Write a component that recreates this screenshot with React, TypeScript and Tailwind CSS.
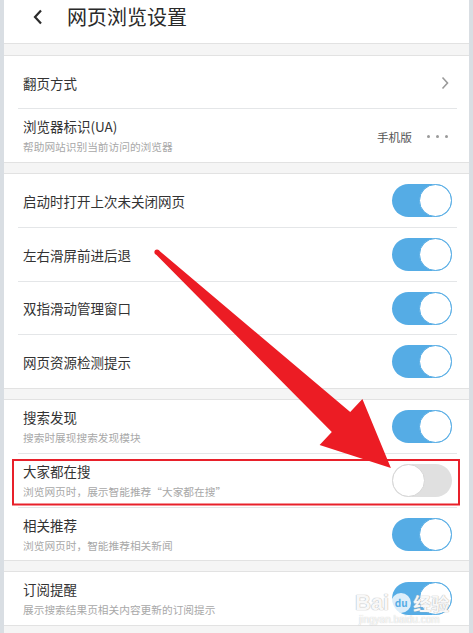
import React from "react";

const FONT = '"Noto Sans CJK SC", "Noto Sans", sans-serif';

function Toggle({ on }: { on: boolean }) {
  return (
    <div
      className={`flex items-center w-[60px] h-[33px] rounded-full ${
        on ? "bg-[#55ace5] justify-end" : "bg-[#e0e0e0] justify-start"
      }`}
    >
      <div
        className={`w-[33px] h-[33px] rounded-full bg-white border-[1.5px] ${
          on ? "border-[#55ace5]" : "border-[#d6d6d6]"
        }`}
      />
    </div>
  );
}

function Divider() {
  return <div className="h-px bg-[#e4e6e8] ml-[14px] mr-[12px]" />;
}

function Gap({ h }: { h: string }) {
  return <div className={`${h} bg-[#f5f5f5]`} />;
}

function Row({
  title,
  sub,
  on,
  h,
}: {
  title: string;
  sub?: string;
  on: boolean;
  h: string;
}) {
  return (
    <div className={`${h} flex items-center justify-between pl-[19px] pr-[17px]`}>
      <div className="flex flex-col gap-[5px]">
        <div className="text-[13.5px] leading-[18px] text-[#333333]">{title}</div>
        {sub && <div className="text-[10.7px] leading-[14px] text-[#a8a8a8]">{sub}</div>}
      </div>
      <Toggle on={on} />
    </div>
  );
}

export default function App() {
  return (
    <div
      className="relative w-[473px] h-[633px] overflow-hidden bg-[#f5f5f5] border-x-4 border-[#d9dee3]"
      style={{ fontFamily: FONT }}
    >
      {/* header */}
      <div className="h-[44px] bg-white border-b border-[#e2e2e2] flex items-center">
        <svg width="12" height="16" viewBox="0 0 12 16" className="ml-[28px] mb-[9px]">
          <path d="M9 1.5 L3 8 L9 14.5" fill="none" stroke="#2b2b2b" strokeWidth="2.2" />
        </svg>
        <div className="ml-[23px] mb-[9px] text-[20px] leading-[26px] text-[#2a2a2a]">网页浏览设置</div>
      </div>
      <Gap h="h-[11px]" />

      {/* section 1 */}
      <div className="bg-white border-y border-[#e2e2e2]">
        <div className="h-[52px] flex items-center justify-between pl-[19px] pr-[20px]">
          <div className="text-[13.5px] leading-[18px] text-[#333333] mt-[2px]">翻页方式</div>
          <svg width="8" height="14" viewBox="0 0 8 14" className="mt-[1px]">
            <path d="M1.5 1.5 L6.5 7 L1.5 12.5" fill="none" stroke="#9a9a9a" strokeWidth="1.6" />
          </svg>
        </div>
        <Divider />
        <div className="h-[53px] flex items-center justify-between pl-[19px] pr-[21px]">
          <div className="flex flex-col gap-[5px]">
            <div className="text-[13.5px] leading-[18px] text-[#333333]">浏览器标识(UA)</div>
            <div className="text-[10.7px] leading-[14px] text-[#a8a8a8]">帮助网站识别当前访问的浏览器</div>
          </div>
          <div className="flex items-center gap-[15px] mt-[2px]">
            <span className="text-[11.7px] leading-[16px] text-[#555555]">手机版</span>
            <div className="flex gap-[6px]">
              <span className="w-[3px] h-[3px] rounded-full bg-[#9a9a9a]" />
              <span className="w-[3px] h-[3px] rounded-full bg-[#9a9a9a]" />
              <span className="w-[3px] h-[3px] rounded-full bg-[#9a9a9a]" />
            </div>
          </div>
        </div>
      </div>
      <Gap h="h-[10px]" />

      {/* section 2 */}
      <div className="bg-white border-y border-[#e2e2e2]">
        <Row title="启动时打开上次未关闭网页" on h="h-[53px]" />
        <Divider />
        <Row title="左右滑屏前进后退" on h="h-[53px]" />
        <Divider />
        <Row title="双指滑动管理窗口" on h="h-[52px]" />
        <Divider />
        <Row title="网页资源检测提示" on h="h-[53px]" />
      </div>
      <Gap h="h-[10px]" />

      {/* section 3 */}
      <div className="bg-white border-y border-[#e2e2e2]">
        <Row title="搜索发现" sub="搜索时展现搜索发现模块" on h="h-[53px]" />
        <Divider />
        <Row title="大家都在搜" sub="浏览网页时，展示智能推荐“大家都在搜”" on={false} h="h-[53px]" />
        <Divider />
        <Row title="相关推荐" sub="浏览网页时，智能推荐相关新闻" on h="h-[52px]" />
      </div>
      <Gap h="h-[10px]" />

      {/* section 4 */}
      <div className="bg-white border-y border-[#e2e2e2]">
        <Row title="订阅提醒" sub="展示搜索结果页相关内容更新的订阅提示" on h="h-[53px]" />
      </div>

      {/* watermark */}
      <div className="absolute left-[351px] top-[592px] flex flex-col items-start pointer-events-none">
        <div className="flex items-center gap-[2px]">
          <span
            className="text-[22px] leading-[22px] font-bold text-white/90 [text-shadow:0_0_1px_#b5b5b5,0_0_1px_#b5b5b5]"
            style={{ fontFamily: '"Liberation Sans", sans-serif' }}
          >
            Bai
          </span>
          <span className="w-[20px] h-[20px] rounded-full bg-white/80 flex items-center justify-center text-[10px] font-bold text-[#55ace5] leading-none">
            du
          </span>
          <span className="text-[18px] leading-[22px] font-bold text-white/90 [text-shadow:0_0_1px_#b5b5b5,0_0_1px_#b5b5b5]">
            经验
          </span>
        </div>
        <span
          className="text-[10px] leading-[12px] text-white/90 [text-shadow:0_0_1px_#b5b5b5] ml-[4px]"
          style={{ fontFamily: '"Liberation Sans", sans-serif' }}
        >
          jingyan.baidu.com
        </span>
      </div>

      {/* annotation */}
      <svg
        className="absolute -left-[4px] top-0 pointer-events-none"
        width="473"
        height="633"
        viewBox="0 0 473 633"
      >
        <rect x="13" y="460" width="446" height="44.5" fill="none" stroke="#e8202a" strokeWidth="2" />
        <circle cx="157" cy="252" r="2.6" fill="#ec1c24" />
        <polygon
          points="158.7,250.2 350.2,412.1 362.4,398.9 390.9,468.1 319.6,445.1 331.8,431.9 155.3,253.8"
          fill="#ec1c24"
        />
      </svg>
    </div>
  );
}
